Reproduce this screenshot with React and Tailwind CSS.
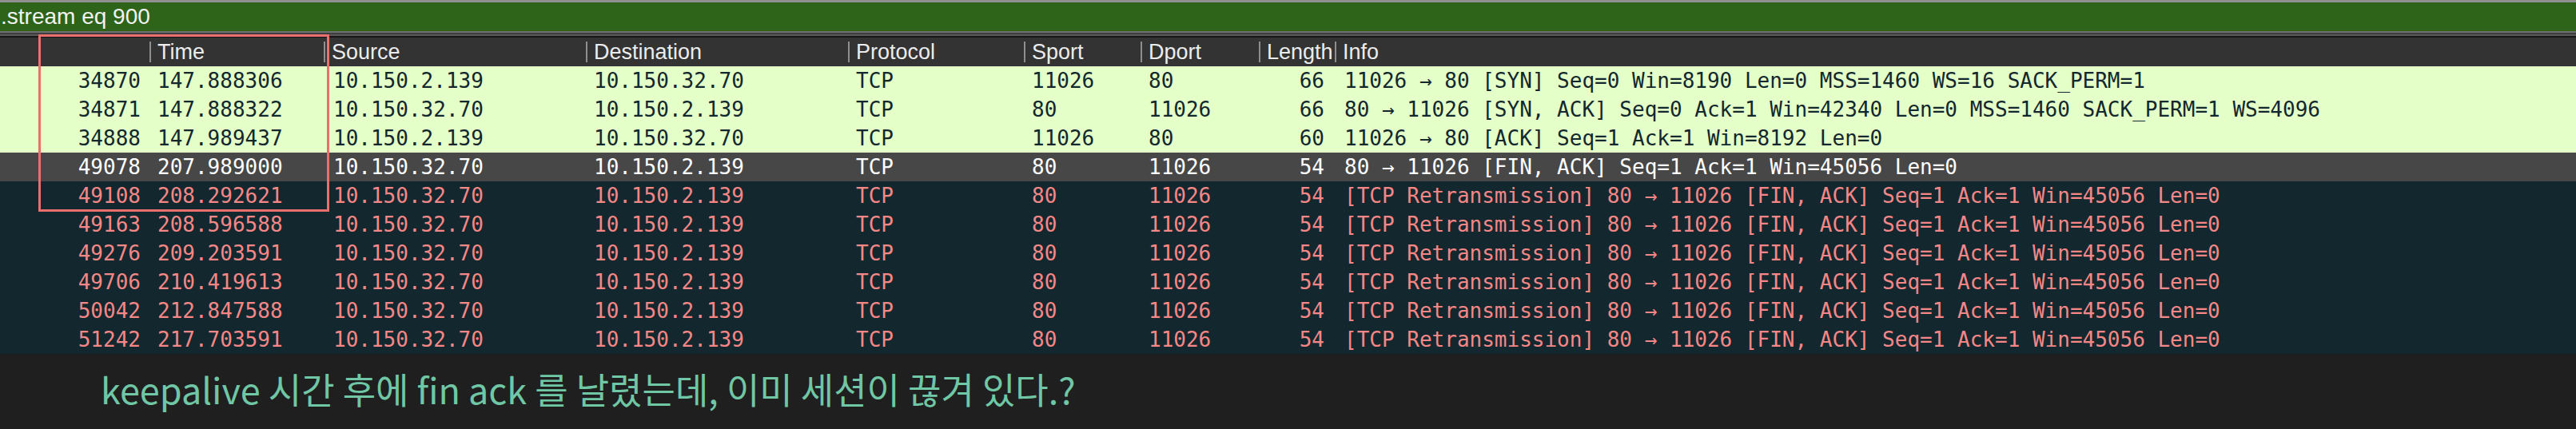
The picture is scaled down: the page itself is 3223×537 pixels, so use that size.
import React from "react";

const mono = { fontFamily: '"DejaVu Sans Mono", "Liberation Mono", monospace' };

const ok = "ok", sel = "sel", bad = "bad";
const retr = "[TCP Retransmission] 80 → 11026 [FIN, ACK] Seq=1 Ack=1 Win=45056 Len=0";
const rows = [
  { no: "34870", time: "147.888306", src: "10.150.2.139", dst: "10.150.32.70", sp: "11026", dp: "80", len: "66", info: "11026 → 80 [SYN] Seq=0 Win=8190 Len=0 MSS=1460 WS=16 SACK_PERM=1", k: ok },
  { no: "34871", time: "147.888322", src: "10.150.32.70", dst: "10.150.2.139", sp: "80", dp: "11026", len: "66", info: "80 → 11026 [SYN, ACK] Seq=0 Ack=1 Win=42340 Len=0 MSS=1460 SACK_PERM=1 WS=4096", k: ok },
  { no: "34888", time: "147.989437", src: "10.150.2.139", dst: "10.150.32.70", sp: "11026", dp: "80", len: "60", info: "11026 → 80 [ACK] Seq=1 Ack=1 Win=8192 Len=0", k: ok },
  { no: "49078", time: "207.989000", src: "10.150.32.70", dst: "10.150.2.139", sp: "80", dp: "11026", len: "54", info: "80 → 11026 [FIN, ACK] Seq=1 Ack=1 Win=45056 Len=0", k: sel },
  { no: "49108", time: "208.292621", src: "10.150.32.70", dst: "10.150.2.139", sp: "80", dp: "11026", len: "54", info: retr, k: bad },
  { no: "49163", time: "208.596588", src: "10.150.32.70", dst: "10.150.2.139", sp: "80", dp: "11026", len: "54", info: retr, k: bad },
  { no: "49276", time: "209.203591", src: "10.150.32.70", dst: "10.150.2.139", sp: "80", dp: "11026", len: "54", info: retr, k: bad },
  { no: "49706", time: "210.419613", src: "10.150.32.70", dst: "10.150.2.139", sp: "80", dp: "11026", len: "54", info: retr, k: bad },
  { no: "50042", time: "212.847588", src: "10.150.32.70", dst: "10.150.2.139", sp: "80", dp: "11026", len: "54", info: retr, k: bad },
  { no: "51242", time: "217.703591", src: "10.150.32.70", dst: "10.150.2.139", sp: "80", dp: "11026", len: "54", info: retr, k: bad },
];

const rowCls = {
  ok: "bg-[#e4ffc7] text-[#12272e]",
  sel: "bg-[#474747] text-[#ffffff]",
  bad: "bg-[#12272e] text-[#f78787]",
};

const grid = "grid grid-cols-[187px_218px_328px_328px_220px_146px_148px_95px_1fr]";

function H({ children }) {
  return (
    <div className="flex items-center h-full overflow-hidden whitespace-nowrap">
      <span className="w-[2px] h-[26px] bg-[#8e8e8e] shrink-0" />
      <span className="pl-[8px]">{children}</span>
    </div>
  );
}

export default function App() {
  return (
    <div className="relative w-[3223px] h-[537px] overflow-hidden bg-[#1f1f1f]">
      {/* filter bar */}
      <div className="h-[3px] bg-[#8f8f8f]" />
      <div
        className="h-[36px] bg-[#2d6419] text-[#f2f2f2] text-[28px] leading-[36px] pl-[1px] whitespace-nowrap"
        style={{ fontFamily: '"Liberation Sans", Arial, sans-serif' }}
      >
        .stream eq 900
      </div>
      <div className="h-[2px] bg-[#6f6f6f]" />
      <div className="h-[2px] bg-[#3e3e3e]" />
      <div className="h-[2px] bg-[#575757]" />
      <div className="h-[2px] bg-[#161616]" />

      {/* header */}
      <div
        className={`${grid} h-[36px] bg-[#333333] text-[#ececec] text-[27px]`}
        style={{ fontFamily: '"Liberation Sans", Arial, sans-serif' }}
      >
        <div />
        <H>Time</H>
        <H>Source</H>
        <H>Destination</H>
        <H>Protocol</H>
        <H>Sport</H>
        <H>Dport</H>
        <H>Length</H>
        <H>Info</H>
      </div>

      {/* rows */}
      <div style={mono} className="text-[26px]">
        {rows.map((r) => (
          <div key={r.no} className={`${grid} h-[36px] leading-[36px] whitespace-nowrap ${rowCls[r.k]}`}>
            <div className="text-right pr-[11px]">{r.no}</div>
            <div className="pl-[10px]">{r.time}</div>
            <div className="pl-[12px]">{r.src}</div>
            <div className="pl-[10px]">{r.dst}</div>
            <div className="pl-[10px]">TCP</div>
            <div className="pl-[10px]">{r.sp}</div>
            <div className="pl-[10px]">{r.dp}</div>
            <div className="text-right pr-[13px]">{r.len}</div>
            <div className="pl-[12px] overflow-hidden">{r.info}</div>
          </div>
        ))}
      </div>

      {/* caption */}
      <div className="h-[94px] flex items-center pl-[126px] pb-[6px] bg-[#1f1f1f]">
        <span
          className="text-[#6fc7a5] text-[45px] leading-[52px] whitespace-nowrap"
          style={{ fontFamily: '"Noto Sans CJK KR", "Noto Sans", sans-serif' }}
        >
          keepalive 시간 후에 fin ack 를 날렸는데, 이미 세션이 끊겨 있다.?
        </span>
      </div>

      {/* annotation box */}
      <div className="absolute left-[48px] top-[43px] w-[364px] h-[222px] border-[3px] border-[#ea6f6d]" />
    </div>
  );
}
